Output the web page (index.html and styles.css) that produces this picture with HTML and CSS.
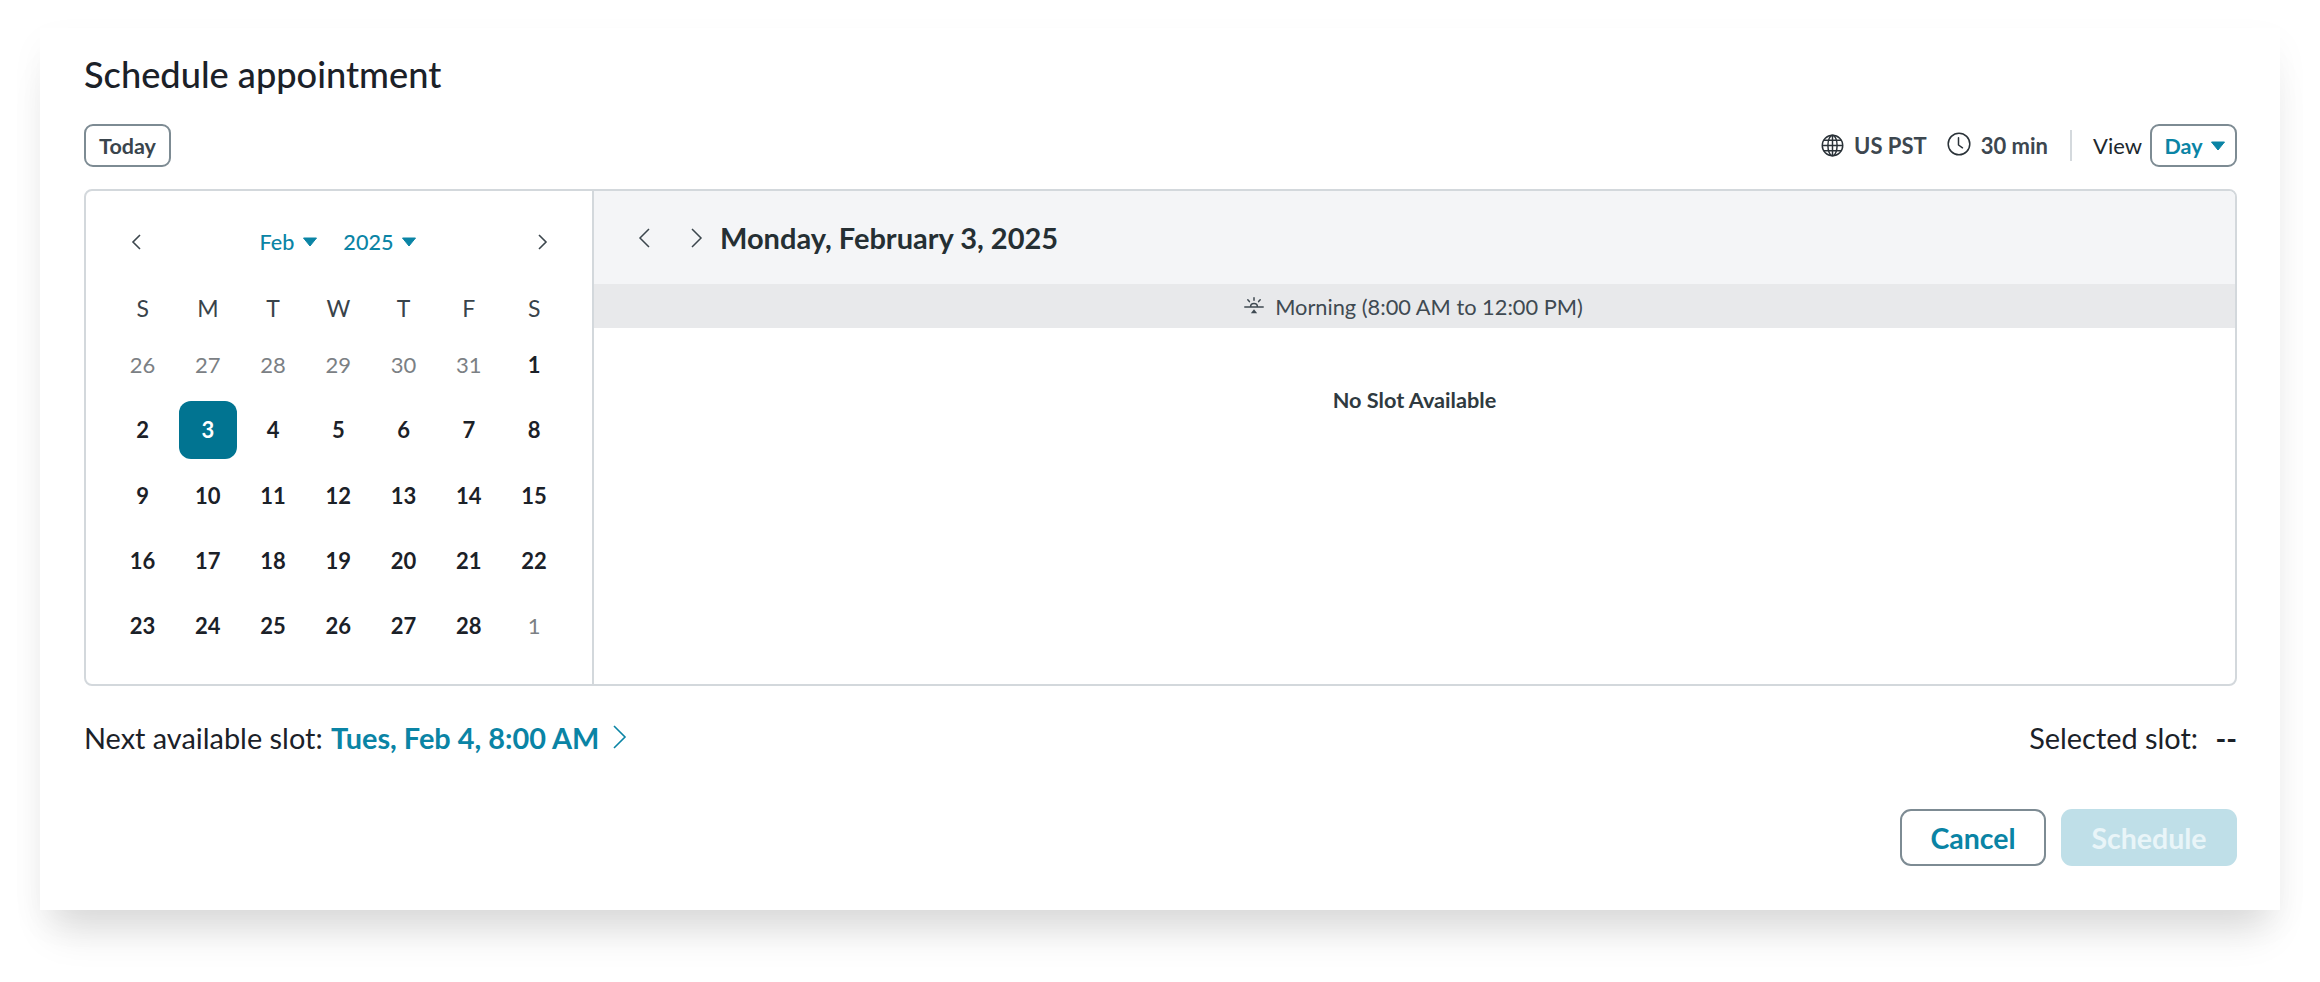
FILE: index.html
```html
<!DOCTYPE html>
<html lang="en">
<head>
<meta charset="utf-8">
<title>Schedule appointment</title>
<link rel="stylesheet" href="styles.css">
</head>
<body>
<main class="card">
  <h1 class="title">Schedule appointment</h1>
  <div class="toolbar">
    <button class="btn-small today">Today</button>
    <div class="tools">
      <span class="tool">
        <svg class="ic-globe" viewBox="0 0 22 22" fill="none" stroke="#2a3238" stroke-width="1.4"><circle cx="11" cy="11" r="9.8"/><ellipse cx="11" cy="11" rx="4.4" ry="9.8"/><path d="M11 1.2v19.6M1.2 11h19.6M2.6 6h16.8M2.6 16h16.8"/></svg>
        US PST
      </span>
      <span class="tool tool-time">
        <svg class="ic-clock" viewBox="0 0 24 24" fill="none" stroke="#2a3238" stroke-width="1.5"><circle cx="12" cy="12" r="10.8"/><path d="M11.5 5.8v7.2l4 2.8" stroke-linecap="round" stroke-linejoin="round"/></svg>
        30 min
      </span>
      <span class="sep"></span>
      <span class="view-label">View</span>
      <button class="btn-small day">Day<svg class="caret" viewBox="0 0 16 10"><path d="M1.5 1h13L8 9z" fill="#0a84a5" stroke="#0a84a5" stroke-linejoin="round"/></svg></button>
    </div>
  </div>

  <section class="panel">
    <div class="cal">
      <div class="cal-nav">
        <svg class="chev-s" viewBox="0 0 12 18" fill="none" stroke="#3c464d" stroke-width="1.6"><path d="M10 2 3 9l7 7"/></svg>
        <div class="pickers">
          <span class="picker">Feb<svg class="caret" viewBox="0 0 16 10"><path d="M1.5 1h13L8 9z" fill="#0a84a5" stroke="#0a84a5" stroke-linejoin="round"/></svg></span>
          <span class="picker">2025<svg class="caret" viewBox="0 0 16 10"><path d="M1.5 1h13L8 9z" fill="#0a84a5" stroke="#0a84a5" stroke-linejoin="round"/></svg></span>
        </div>
        <svg class="chev-s" viewBox="0 0 12 18" fill="none" stroke="#3c464d" stroke-width="1.6"><path d="m2 2 7 7-7 7"/></svg>
      </div>
      <div class="weekdays"><span>S</span><span>M</span><span>T</span><span>W</span><span>T</span><span>F</span><span>S</span></div>
      <div class="days">
        <span class="dim">26</span><span class="dim">27</span><span class="dim">28</span><span class="dim">29</span><span class="dim">30</span><span class="dim">31</span><span>1</span>
        <span>2</span><span class="sel">3</span><span>4</span><span>5</span><span>6</span><span>7</span><span>8</span>
        <span>9</span><span>10</span><span>11</span><span>12</span><span>13</span><span>14</span><span>15</span>
        <span>16</span><span>17</span><span>18</span><span>19</span><span>20</span><span>21</span><span>22</span>
        <span>23</span><span>24</span><span>25</span><span>26</span><span>27</span><span>28</span><span class="dim">1</span>
      </div>
    </div>
    <div class="slots">
      <div class="slots-head">
        <svg class="chev-m" viewBox="0 0 24 24" fill="none" stroke="#3c464d" stroke-width="1.5"><path d="m15 3-9 9 9 9"/></svg>
        <svg class="chev-m" viewBox="0 0 24 24" fill="none" stroke="#3c464d" stroke-width="1.5"><path d="m9 3 9 9-9 9"/></svg>
        <h2 class="date">Monday, February 3, 2025</h2>
      </div>
      <div class="band">
        <svg class="ic-sun" viewBox="0 0 20 18" fill="none" stroke="#3f4a52" stroke-width="1.5" stroke-linecap="round"><path d="M10 .8v2.4M3.8 2.8 5.4 4.6M16.2 2.8l-1.6 1.8M6.6 9.6a3.4 3.2 0 0 1 6.8 0M.8 10h18.4M8.4 15.4 10 13.4l1.6 2z"/></svg>
        Morning (8:00 AM to 12:00 PM)
      </div>
      <p class="empty">No Slot Available</p>
    </div>
  </section>

  <div class="summary">
    <div class="next">Next available slot: <a class="next-link">Tues, Feb 4, 8:00 AM<svg class="chev-l" viewBox="0 0 15 26" fill="none" stroke="#0a84a5" stroke-width="1.6"><path d="m2 2 11 11L2 24"/></svg></a></div>
    <div class="selected">Selected slot: <span class="dash">--</span></div>
  </div>

  <div class="actions">
    <button class="btn cancel">Cancel</button>
    <button class="btn schedule">Schedule</button>
  </div>
</main>
</body>
</html>
```

FILE: styles.css
```css
* { box-sizing: border-box; }
html, body { margin: 0; padding: 0; background: #fff; }
body { width: 2320px; height: 982px; overflow: hidden; font-family: Lato, "Open Sans", sans-serif; color: #1b2128; }

.card {
  margin: 28px 40px 0;
  height: 882px;
  padding: 22px 43px 44px 44px;
  background: #fff;
  box-shadow: 0 34px 38px -14px rgba(0,0,0,.125), 0 14px 34px rgba(0,0,0,.04);
}
.title { margin: 0 0 26px; font-size: 36.2px; line-height: 48px; font-weight: 500; }

.toolbar { display: flex; justify-content: space-between; align-items: center; height: 43px; margin-bottom: 22px; }
.btn-small {
  height: 43px; border: 2px solid #7d8b93; border-radius: 9px; background: #fff;
  font-family: inherit; font-size: 21.5px; font-weight: 700; padding: 0; display: inline-flex; align-items: center; justify-content: center;
}
.today { width: 87px; color: #3a454d; }
.day { width: 87px; color: #0a84a5; gap: 7px; padding-left: 3px; }
.tools { display: flex; align-items: center; }
.tool { display: inline-flex; align-items: center; font-size: 22px; font-weight: 700; color: #3d474f; }
.ic-globe { width: 23px; height: 23px; margin-right: 10px; }
.ic-clock { width: 24px; height: 24px; margin-right: 10px; margin-top: -3px; }
.tool-time { margin-left: 20px; }
.sep { width: 2px; height: 31px; background: #d4d9dd; margin: 0 21px 0 22px; }
.view-label { font-size: 22px; color: #20282e; margin-right: 8px; }
.caret { width: 16px; height: 10px; }

.panel { display: flex; height: 497px; margin-bottom: 31px; border: 2px solid #d3d8dc; border-radius: 8px; overflow: hidden; }
.cal { width: 508px; flex: none; padding: 31px 24px 0; border-right: 2px solid #d3d8dc; }
.cal-nav { display: flex; align-items: center; justify-content: space-between; height: 40px; padding: 0 19px 0 20px; margin-bottom: 26px; }
.chev-s { width: 12px; height: 18px; }
.pickers { display: flex; gap: 25px; margin-right: 2px; }
.picker { display: inline-flex; align-items: center; gap: 8px; font-size: 21.6px; font-weight: 500; color: #0a84a5; }
.weekdays, .days { display: grid; grid-template-columns: repeat(7, 65.25px); }
.weekdays { height: 40px; margin-bottom: 4px; align-items: center; justify-items: center; font-size: 23px; color: #39434a; }
.days { grid-auto-rows: 65.25px; align-items: center; justify-items: center; font-size: 22px; font-weight: 700; color: #1b2128; }
.days span { display: flex; align-items: center; justify-content: center; width: 58px; height: 58px; }
.days .dim { font-weight: 400; color: #7b8084; }
.days .sel { background: #017491; color: #fff; border-radius: 12px; }

.slots { flex: 1; min-width: 0; }
.slots-head { display: flex; align-items: center; height: 93px; padding-left: 40px; background: #f4f5f7; }
.chev-m { width: 24px; height: 24px; margin-right: 25px; }
.chev-m + .chev-m { margin-right: 13px; }
.date { margin: 0; font-size: 29px; font-weight: 700; color: #252f33; }
.band { display: flex; align-items: center; justify-content: center; gap: 11px; height: 44px; padding-right: 2px; background: #e8e9eb; font-size: 21.8px; color: #3f4a52; }
.ic-sun { width: 20px; height: 18px; }
.empty { margin: 57px 0 0; line-height: 30px; text-align: center; font-size: 21.7px; font-weight: 700; color: #2f3a40; }

.summary { display: flex; justify-content: space-between; align-items: center; height: 40px; margin-bottom: 52px; font-size: 28.9px; }
.next-link { display: inline-flex; align-items: center; gap: 13px; font-weight: 700; color: #0a84a5; margin-left: 1px; vertical-align: baseline; }
.chev-l { width: 15px; height: 26px; }
.dash { margin-left: 10px; font-weight: 700; }

.actions { display: flex; justify-content: flex-end; gap: 15px; }
.btn { height: 57px; border-radius: 11px; font-family: inherit; font-size: 28.5px; font-weight: 700; padding: 0; }
.cancel { width: 146px; background: #fff; border: 2px solid #7d8b93; color: #0a84a5; }
.schedule { width: 176px; background: #bfdfe8; border: 0; color: #e9f5f8; }
```
